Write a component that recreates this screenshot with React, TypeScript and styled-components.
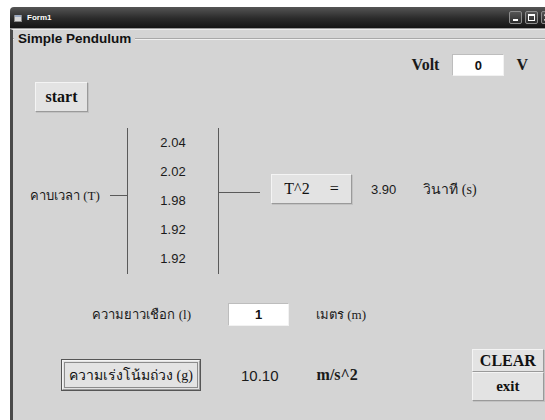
import styled, { createGlobalStyle } from "styled-components";

const GlobalStyle = createGlobalStyle`
  html, body {
    margin: 0;
    padding: 0;
    background: #ffffff;
    overflow: hidden;
  }
`;

const Window = styled.div`
  margin: 7px 0 0 10px;
  width: 548px;
  min-width: 548px;
  height: 413px;
  display: flex;
  flex-direction: column;
  border-top-left-radius: 4px;
  overflow: hidden;
`;

const TitleBar = styled.div`
  height: 21px;
  display: flex;
  align-items: center;
  gap: 4px;
  padding-left: 4px;
  background: linear-gradient(#555555, #2a2a2a 55%, #141414);
  border-bottom: 1px solid #9a9a9a;
`;

const TitleText = styled.span`
  color: #ffffff;
  font-family: "Liberation Sans", Arial, sans-serif;
  font-size: 8px;
  font-weight: bold;
  flex: 1;
`;

const Controls = styled.div`
  display: flex;
  gap: 3px;
  margin-right: 4px;
`;

const CtrlButton = styled.div`
  width: 11px;
  height: 11px;
  border: 1px solid #8c8c8c;
  border-radius: 2px;
  background: linear-gradient(#555, #2c2c2c);
  display: flex;
  align-items: center;
  justify-content: center;
`;

const Client = styled.div`
  flex: 1;
  background: #d4d4d4;
  border-left: 3px solid #4a4a4a;
  border-top: 1px solid #ececec;
  display: flex;
  flex-direction: column;
`;

const FrameHeader = styled.div`
  display: flex;
  align-items: center;
  height: 17px;
  gap: 4px;
`;

const FrameLine = styled.div<{ $w?: number }>`
  height: 0;
  border-top: 1px solid #a8a8a8;
  border-bottom: 1px solid #f0f0f0;
  ${(p) => (p.$w ? `width: ${p.$w}px;` : "flex: 1;")}
`;

const FrameTitle = styled.span`
  font-family: "Liberation Sans", Arial, sans-serif;
  font-weight: bold;
  font-size: 13.5px;
  color: #111;
  line-height: 17px;
`;

const Row = styled.div<{ $top: number; $left?: number; $end?: boolean }>`
  display: flex;
  align-items: center;
  margin-top: ${(p) => p.$top}px;
  margin-left: ${(p) => p.$left ?? 0}px;
  ${(p) => (p.$end ? "justify-content: flex-end; padding-right: 30px;" : "")}
`;

const Gap = styled.span<{ $w: number }>`
  display: inline-block;
  width: ${(p) => p.$w}px;
  flex: none;
`;

const SerifLabel = styled.span<{ $size?: number; $bold?: boolean }>`
  font-family: "Liberation Serif", "Times New Roman", "Noto Sans", serif;
  font-size: ${(p) => p.$size ?? 14}px;
  font-weight: ${(p) => (p.$bold ? "bold" : "normal")};
  color: #1a1a1a;
  white-space: nowrap;
`;

const SansValue = styled.span<{ $size?: number }>`
  font-family: "Liberation Sans", Arial, sans-serif;
  font-size: ${(p) => p.$size ?? 13}px;
  color: #1a1a1a;
  white-space: nowrap;
`;

const Input = styled.div<{ $w: number; $h?: number }>`
  width: ${(p) => p.$w}px;
  height: ${(p) => p.$h ?? 22}px;
  box-sizing: border-box;
  background: #ffffff;
  border-top: 1px solid #bdbdbd;
  border-left: 1px solid #bdbdbd;
  border-right: 1px solid #f2f2f2;
  border-bottom: 1px solid #f2f2f2;
  display: flex;
  align-items: center;
  justify-content: center;
  font-family: "Liberation Sans", Arial, sans-serif;
  font-weight: bold;
  font-size: 13px;
  color: #111;
`;

const Button = styled.div<{ $w: number; $h: number; $default?: boolean; $size?: number; $bold?: boolean }>`
  width: ${(p) => p.$w}px;
  height: ${(p) => p.$h}px;
  box-sizing: border-box;
  background: #e3e3e3;
  display: flex;
  align-items: center;
  justify-content: center;
  font-family: "Liberation Serif", "Times New Roman", "Noto Sans", serif;
  font-size: ${(p) => p.$size ?? 16}px;
  font-weight: ${(p) => (p.$bold ? "bold" : "normal")};
  color: #111;
  white-space: nowrap;
  border-top: 1px solid #f4f4f4;
  border-left: 1px solid #f4f4f4;
  border-right: 1px solid #9a9a9a;
  border-bottom: 1px solid #9a9a9a;
  ${(p) =>
    p.$default
      ? `outline: 1px solid #555; outline-offset: 0; box-shadow: inset 0 0 0 1px #e3e3e3, inset 0 0 0 2px #8c8c8c;`
      : `box-shadow: 1px 1px 0 #c2c2c2;`}
`;

const Measure = styled.div`
  display: flex;
  align-items: flex-start;
  margin-top: 16px;
  height: 146px;
`;

const SideGroup = styled.div<{ $top: number }>`
  display: flex;
  align-items: center;
  margin-top: ${(p) => p.$top}px;
`;

const PeriodLabel = styled(SerifLabel)`
  width: 80px;
  padding-left: 17px;
`;

const HLine = styled.div<{ $w: number; $shift?: number }>`
  width: ${(p) => p.$w}px;
  height: 1px;
  background: #5a5a5a;
  margin-top: ${(p) => p.$shift ?? 0}px;
`;

const Bracket = styled.div`
  width: 92px;
  height: 146px;
  box-sizing: border-box;
  border-left: 1px solid #5a5a5a;
  border-right: 1px solid #5a5a5a;
  display: flex;
  flex-direction: column;
  align-items: center;
`;

const Reading = styled(SansValue)`
  line-height: 29px;
`;

const FieldLabel = styled(SerifLabel)`
  width: 178px;
  padding-right: 37px;
  text-align: right;
`;

const Bottom = styled.div`
  display: flex;
  align-items: flex-start;
  margin-top: 23px;
`;

const GravityGroup = styled.div`
  display: flex;
  align-items: center;
  margin-left: 49px;
  margin-top: 11px;
`;

const Stack = styled.div`
  display: flex;
  flex-direction: column;
  margin-left: 114px;
  box-shadow: 1px 1px 0 #b8b8b8;
`;

const readings = ["2.04", "2.02", "1.98", "1.92", "1.92"];

export default function App() {
  return (
    <>
      <GlobalStyle />
      <Window>
        <TitleBar>
          <svg width="9" height="8" viewBox="0 0 9 8">
            <rect x="0.5" y="1.5" width="7" height="6" fill="#d8d8d8" stroke="#888" />
            <rect x="1" y="1" width="6" height="2" fill="#9aa8c0" />
          </svg>
          <TitleText>Form1</TitleText>
          <Controls>
            <CtrlButton>
              <svg width="7" height="7" viewBox="0 0 7 7">
                <rect x="1" y="5" width="5" height="2" fill="#fff" />
              </svg>
            </CtrlButton>
            <CtrlButton>
              <svg width="7" height="7" viewBox="0 0 7 7">
                <rect x="0.5" y="0.5" width="6" height="6" fill="none" stroke="#fff" />
                <rect x="0" y="0" width="7" height="2" fill="#fff" />
              </svg>
            </CtrlButton>
            <CtrlButton>
              <svg width="7" height="7" viewBox="0 0 7 7">
                <path d="M0.5 0.5 L6.5 6.5 M6.5 0.5 L0.5 6.5" stroke="#fff" strokeWidth="1.6" />
              </svg>
            </CtrlButton>
          </Controls>
        </TitleBar>
        <Client>
          <FrameHeader>
            <FrameLine $w={1} />
            <FrameTitle>Simple Pendulum</FrameTitle>
            <FrameLine />
          </FrameHeader>

          <Row $top={7} $end>
            <SerifLabel $size={16} $bold>Volt</SerifLabel>
            <Gap $w={13} />
            <Input $w={52}>0</Input>
            <Gap $w={12} />
            <SerifLabel $size={16} $bold>V</SerifLabel>
          </Row>

          <Row $top={6} $left={22}>
            <Button $w={53} $h={30} $bold>start</Button>
          </Row>

          <Measure>
            <SideGroup $top={57}>
              <PeriodLabel $size={13}>คาบเวลา (T)</PeriodLabel>
              <HLine $w={17} />
            </SideGroup>
            <Bracket>
              {readings.map((r, i) => (
                <Reading key={i}>{r}</Reading>
              ))}
            </Bracket>
            <SideGroup $top={46}>
              <HLine $w={41} $shift={6} />
              <Gap $w={11} />
              <Button $w={81} $h={30}>
                T^2&nbsp;&nbsp;&nbsp;&nbsp;&nbsp;=
              </Button>
              <Gap $w={19} />
              <SansValue>3.90</SansValue>
              <Gap $w={27} />
              <SerifLabel $size={14}>วินาที (s)</SerifLabel>
            </SideGroup>
          </Measure>

          <Row $top={29}>
            <FieldLabel $size={13}>ความยาวเชือก (l)</FieldLabel>
            <Input $w={61} $h={23}>1</Input>
            <Gap $w={27} />
            <SerifLabel $size={13}>เมตร (m)</SerifLabel>
          </Row>

          <Bottom>
            <GravityGroup>
              <Button $w={138} $h={30} $default $size={14}>ความเร่งโน้มถ่วง (g)</Button>
              <Gap $w={41} />
              <SansValue $size={15}>10.10</SansValue>
              <Gap $w={38} />
              <SerifLabel $size={16} $bold>m/s^2</SerifLabel>
            </GravityGroup>
            <Stack>
              <Button $w={72} $h={23} $bold>CLEAR</Button>
              <Button $w={72} $h={29} $bold $size={15}>exit</Button>
            </Stack>
          </Bottom>
        </Client>
      </Window>
    </>
  );
}
